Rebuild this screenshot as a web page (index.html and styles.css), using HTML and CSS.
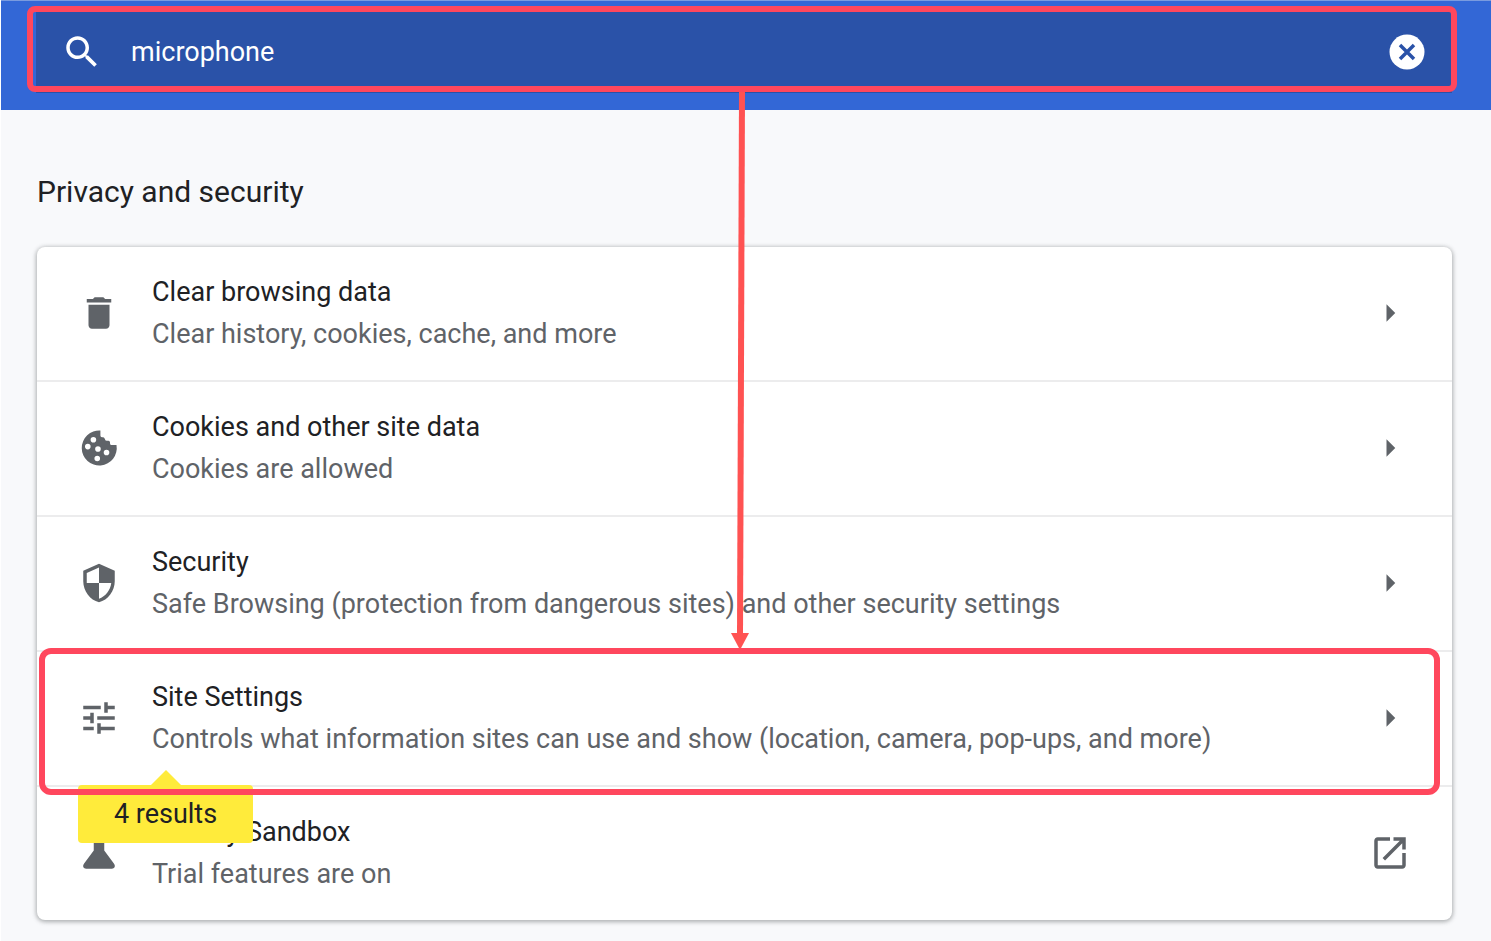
FILE: index.html
```
<!DOCTYPE html>
<html lang="en">

<head>
    <meta charset="UTF-8">
    <meta name="viewport" content="width=device-width, initial-scale=1.0">
    <title>Settings - Privacy and security</title>
    <link rel="stylesheet" href="styles.css">
</head>

<body>
    <header class="toolbar">
        <form class="search" role="search">
            <label class="search-label" for="search-input" aria-label="Search settings">
                <svg class="icon" viewBox="0 0 24 24"><path d="M15.5 14h-.79l-.28-.27C15.41 12.59 16 11.11 16 9.5 16 5.91 13.09 3 9.5 3S3 5.91 3 9.5 5.91 16 9.5 16c1.61 0 3.09-.59 4.23-1.57l.27.28v.79l5 4.99L20.49 19l-4.99-5zm-6 0C7.01 14 5 11.99 5 9.5S7.01 5 9.5 5 14 7.01 14 9.5 11.99 14 9.5 14z"/></svg>
            </label>
            <input class="search-input" id="search-input" type="text" value="microphone">
            <button class="clear" type="button" aria-label="Clear search">
                <svg class="icon" viewBox="0 0 24 24"><circle cx="12" cy="12" r="10"/><path class="cross" d="M8 8l8 8M16 8l-8 8"/></svg>
            </button>
            <span class="highlight highlight-search"></span>
        </form>
    </header>

    <main class="content">
        <h2>Privacy and security</h2>
        <div class="card">
            <a class="row" href="#clear">
                <svg class="icon" viewBox="0 0 24 24"><path d="M6 19c0 1.1.9 2 2 2h8c1.1 0 2-.9 2-2V7.300H6V19zM19 4h-3.500l-1-1h-5l-1 1H5v2h14V4z"/></svg>
                <span class="text">
                    <span class="label">Clear browsing data</span>
                    <span class="sub-label">Clear history, cookies, cache, and more</span>
                </span>
                <svg class="icon" viewBox="0 0 24 24"><path d="M10 17l5-5-5-5v10z"/></svg>
            </a>
            <a class="row" href="#cookies">
                <svg class="icon" viewBox="0 0 24 24"><path fill-rule="evenodd" d="M12.800 2A10 10 0 1 0 22 10.300H19.200Q18.300 10.300 18.300 9.400V8.800Q18.300 7.900 17.400 7.900H16.500Q15.600 7.900 15.400 7L15.200 6.600Q15 5.800 14.100 5.800H13.700Q12.800 5.800 12.800 4.900zM8.800 5.700a1.600 1.600 0 1 1 0 3.200a1.600 1.600 0 1 1 0-3.200zM5.600 9.600a1.600 1.600 0 1 1 0 3.200a1.600 1.600 0 1 1 0-3.200zM11.400 11a1.600 1.600 0 1 1 0 3.200a1.600 1.600 0 1 1 0-3.200zM16.300 13a1.600 1.600 0 1 1 0 3.200a1.600 1.600 0 1 1 0-3.200zM11 16.400a1.600 1.600 0 1 1 0 3.200a1.600 1.600 0 1 1 0-3.200z"/></svg>
                <span class="text">
                    <span class="label">Cookies and other site data</span>
                    <span class="sub-label">Cookies are allowed</span>
                </span>
                <svg class="icon" viewBox="0 0 24 24"><path d="M10 17l5-5-5-5v10z"/></svg>
            </a>
            <a class="row" href="#security">
                <svg class="icon" viewBox="0 0 24 24"><path d="M12 1L3 5v6c0 5.550 3.840 10.740 9 12 5.160-1.260 9-6.450 9-12V5l-9-4zm0 10.990h7c-.53 4.120-3.280 7.790-7 8.940V12H5V6.300l7-3.110v8.800z"/></svg>
                <span class="text">
                    <span class="label">Security</span>
                    <span class="sub-label">Safe Browsing (protection from dangerous sites) and other security settings</span>
                </span>
                <svg class="icon" viewBox="0 0 24 24"><path d="M10 17l5-5-5-5v10z"/></svg>
            </a>
            <a class="row" href="#site-settings">
                <svg class="icon" viewBox="0 0 24 24"><path d="M3 17v2h6v-2H3zM3 5v2h10V5H3zm10 16v-2h8v-2h-8v-2h-2v6h2zM7 9v2H3v2h4v2h2V9H7zm14 4v-2H11v2h10zm-6-4h2V7h4V5h-4V3h-2v6z"/></svg>
                <span class="text">
                    <span class="label">Site Settings</span>
                    <span class="sub-label">Controls what information sites can use and show (location, camera, pop-ups, and more)</span>
                </span>
                <svg class="icon" viewBox="0 0 24 24"><path d="M10 17l5-5-5-5v10z"/></svg>
                <span class="bubble">4 results</span>
                <span class="highlight highlight-row"></span>
            </a>
            <a class="row" href="#sandbox">
                <svg class="icon" viewBox="0 0 24 24"><path d="M9 3h6v7.500l5.600 7.700c1 1.500.2 2.800-1.200 2.800H4.600c-1.400 0-2.200-1.300-1.200-2.800L9 10.500z"/></svg>
                <span class="text">
                    <span class="label">Privacy Sandbox</span>
                    <span class="sub-label">Trial features are on</span>
                </span>
                <svg class="icon" viewBox="0 0 24 24"><path d="M19 19H5V5h7V3H5c-1.110 0-2 .9-2 2v14c0 1.100.89 2 2 2h14c1.100 0 2-.9 2-2v-7h-2v7zM14 3v2h3.590l-9.830 9.830 1.410 1.410L19 6.410V10h2V3h-7z"/></svg>
            </a>
        </div>
    </main>

    <!-- arrow from the search box to the matching row -->
    <svg class="arrow" viewBox="0 0 20 560"><path class="line" d="M12 0L10 545"/><path d="M1 541h18l-9 17z"/></svg>
</body>

</html>
```

FILE: styles.css
```
* {
    box-sizing: border-box;
}

body {
    margin: 0;
    position: relative;
    border-left: 1px solid white;
    background-color: #f8f9fb;
    color: #202124;
    font-family: Roboto, sans-serif;
    font-size: 27px;
}

.toolbar {
    height: 110px;
    padding: 10px 39px 17px 35px;
    border-top: 1px solid #7a9bdf;
    background-color: #3367d6;
}

.search {
    position: relative;
    display: flex;
    align-items: center;
    height: 82px;
    padding: 0 24px 0 25px;
    background-color: #2a52a8;
}

.search-label,
.clear {
    display: flex;
    padding: 0;
    border: none;
    background: none;
}

.search-input {
    flex: 1;
    min-width: 0;
    margin-left: 28px;
    padding: 0;
    border: none;
    outline: none;
    background: none;
    color: white;
    font: inherit;
}

.icon {
    flex: none;
    width: 42px;
    height: 42px;
    fill: #5f6368;
}

.search .icon {
    fill: white;
}

.search .cross {
    fill: none;
    stroke: #2a52a8;
    stroke-width: 2;
}

.content {
    padding: 61px 39px 21px 36px;
}

h2 {
    margin: 0 0 34px;
    font-size: 30px;
    font-weight: normal;
    line-height: 42px;
}

.card {
    border-radius: 8px;
    background-color: white;
    box-shadow: 0 1px 4px 1px rgba(60, 64, 67, 0.4);
}

.row {
    position: relative;
    display: flex;
    align-items: center;
    gap: 32px;
    padding: 24px 41px 25px;
    color: inherit;
    text-decoration: none;
}

.row + .row {
    border-top: 2px solid #ececed;
}

.text {
    flex: 1;
    display: flex;
    flex-direction: column;
    line-height: 42px;
}

.sub-label {
    color: #5f6368;
}

.bubble {
    position: absolute;
    left: 41px;
    top: 133px;
    z-index: 1;
    width: 175px;
    border-radius: 4px;
    background-color: #ffeb3b;
    line-height: 58px;
    text-align: center;
}

.bubble::before {
    content: "";
    position: absolute;
    left: 50%;
    bottom: 100%;
    margin-left: -15px;
    border: 15px solid transparent;
    border-top: none;
    border-bottom-color: #ffeb3b;
}

.highlight {
    position: absolute;
    z-index: 2;
    border: 6px solid #ff475d;
    pointer-events: none;
}

.highlight-search {
    inset: -5px -5px 1px -9px;
    border-radius: 8px;
}

.highlight-row {
    inset: -4px 12px -10px 2px;
    border-radius: 12px;
}

.arrow {
    position: absolute;
    left: calc(50% - 16px);
    top: 92px;
    z-index: 3;
    width: 20px;
    height: 560px;
    fill: #ff5252;
}

.arrow .line {
    stroke: #ff5252;
    stroke-width: 6;
}
```
